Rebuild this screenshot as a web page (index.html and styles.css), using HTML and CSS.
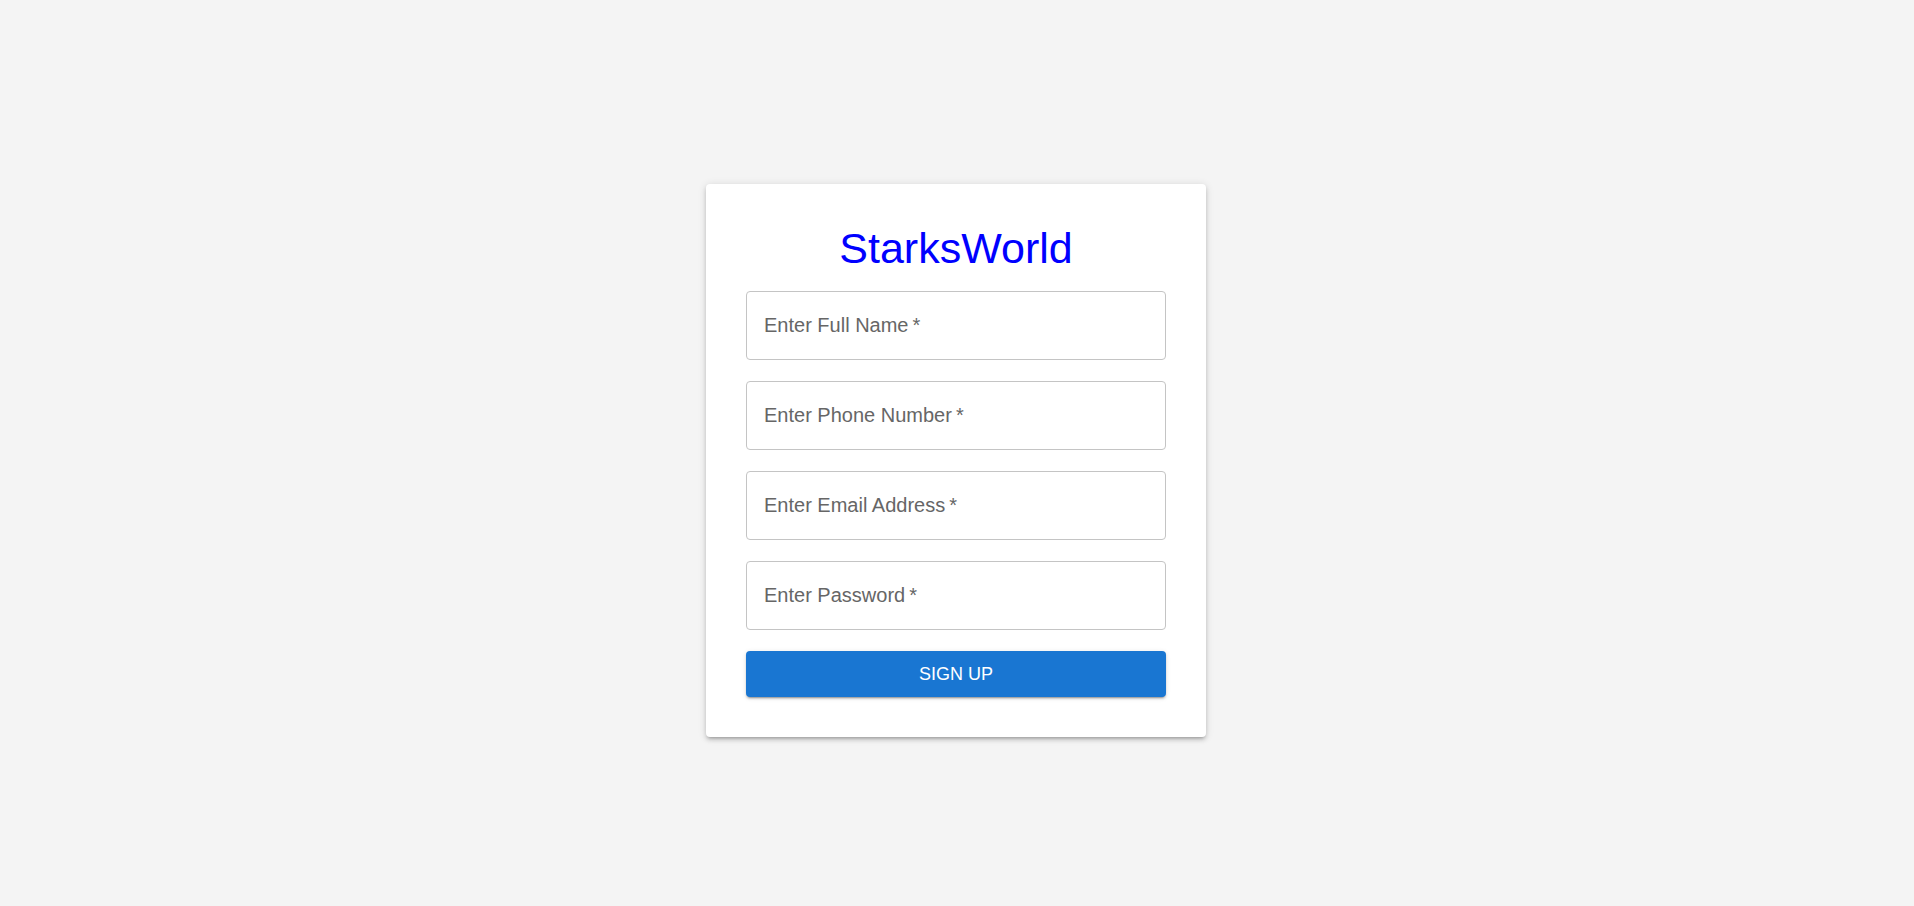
FILE: index.html
```html
<!DOCTYPE html>
<html lang="en">
<head>
<meta charset="utf-8">
<title>StarksWorld - Sign Up</title>
<link rel="stylesheet" href="styles.css">
</head>
<body>
<main class="page">
  <form class="card" onsubmit="return false;">
    <h1 class="title">StarksWorld</h1>
    <div class="fields">
      <label class="field"><span class="label">Enter Full Name&#8201;*</span></label>
      <label class="field"><span class="label">Enter Phone Number&#8201;*</span></label>
      <label class="field"><span class="label">Enter Email Address&#8201;*</span></label>
      <label class="field"><span class="label">Enter Password&#8201;*</span></label>
      <button class="btn" type="submit">Sign Up</button>
    </div>
  </form>
</main>
</body>
</html>
```

FILE: styles.css
```css
html, body {
  margin: 0;
  padding: 0;
}

body {
  background: #f4f4f4;
  font-family: "Liberation Sans", Arial, sans-serif;
  min-height: 100vh;
}

.page {
  display: flex;
  justify-content: center;
  padding: 184px 2px 0 0;
}

.card {
  width: 500px;
  box-sizing: border-box;
  background: #ffffff;
  border-radius: 4px;
  padding: 40px 40px 40px;
  box-shadow: 0 3px 3px -2px rgba(0,0,0,0.2), 0 3px 4px 0 rgba(0,0,0,0.14), 0 1px 8px 0 rgba(0,0,0,0.12);
}

.title {
  margin: 0 0 19px;
  font-size: 43px;
  font-weight: 400;
  line-height: 48px;
  color: #0000ff;
  text-align: center;
}

.fields {
  display: flex;
  flex-direction: column;
  gap: 21px;
}

.field {
  display: flex;
  align-items: center;
  height: 69px;
  box-sizing: border-box;
  border: 1px solid #c4c4c4;
  border-radius: 4px;
  padding: 0 17px 0 17px;
}

.label {
  font-size: 20px;
  color: #666666;
}

.btn {
  height: 46px;
  border: 0;
  border-radius: 4px;
  background: #1976d2;
  color: #ffffff;
  font-family: "Liberation Sans", Arial, sans-serif;
  font-size: 18px;
  text-transform: uppercase;
  cursor: pointer;
  box-shadow: 0 3px 1px -2px rgba(0,0,0,0.2), 0 2px 2px 0 rgba(0,0,0,0.14), 0 1px 5px 0 rgba(0,0,0,0.12);
}
```
